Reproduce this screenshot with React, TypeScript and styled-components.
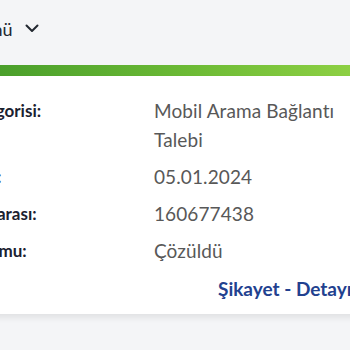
import React from "react";
import styled, { createGlobalStyle } from "styled-components";

const Global = createGlobalStyle`
  html, body { margin: 0; padding: 0; }
  body {
    background: #f4f5f7;
    font-family: Lato, "Noto Sans", sans-serif;
    width: 350px;
    height: 350px;
    overflow: hidden;
  }
`;

const Page = styled.div`
  width: 350px;
  height: 350px;
  overflow: hidden;
  background: #f4f5f7;
`;

const Header = styled.div`
  height: 65px;
  display: flex;
  align-items: center;
  gap: 12px;
  margin-left: -31px;
  padding-bottom: 8px;
  box-sizing: border-box;
  font-size: 18px;
  color: #222831;
`;

const GreenBar = styled.div`
  height: 11px;
  width: 420px;
  background: linear-gradient(90deg, #4a9f2b 0%, #6cba35 45%, #9bd94a 100%);
`;

const Card = styled.div`
  width: 520px;
  margin-left: -99px;
  background: #fff;
  padding: 20px 0 11px;
  box-shadow: 0 4px 6px rgba(0, 0, 0, 0.08);
`;

const Rows = styled.div`
  display: grid;
  grid-template-columns: 253px 1fr;
  row-gap: 8px;
`;

const Label = styled.div`
  font-weight: 700;
  font-size: 17px;
  line-height: 29px;
  color: #1b2130;
  white-space: nowrap;
`;

const Value = styled.div`
  font-size: 19px;
  line-height: 29px;
  color: #585858;
  width: 200px;
  letter-spacing: 0.1px;
`;

const LinkRow = styled.div`
  margin-top: 9px;
  padding-left: 317px;
  font-weight: 700;
  font-size: 19px;
  line-height: 29px;
  color: #22418f;
  white-space: nowrap;
`;

const rows: [string, string][] = [
  ["Şikayet Kategorisi:", "Mobil Arama Bağlantı Talebi"],
  ["Şikayet Tarih:", "05.01.2024"],
  ["Şikayet Numarası:", "160677438"],
  ["Şikayet Durumu:", "Çözüldü"],
];

export default function App() {
  return (
    <Page>
      <Global />
      <Header>
        <span>Tümü</span>
        <svg width="14" height="9" viewBox="0 0 14 9" fill="none">
          <path d="M1.5 1.5 L7 7 L12.5 1.5" stroke="#222831" strokeWidth="2" strokeLinecap="round" strokeLinejoin="round" />
        </svg>
      </Header>
      <GreenBar />
      <Card>
        <Rows>
          {rows.map(([l, v]) => (
            <React.Fragment key={l}>
              <Label>{l}</Label>
              <Value>{v}</Value>
            </React.Fragment>
          ))}
        </Rows>
        <LinkRow>Şikayet - Detayı</LinkRow>
      </Card>
    </Page>
  );
}
